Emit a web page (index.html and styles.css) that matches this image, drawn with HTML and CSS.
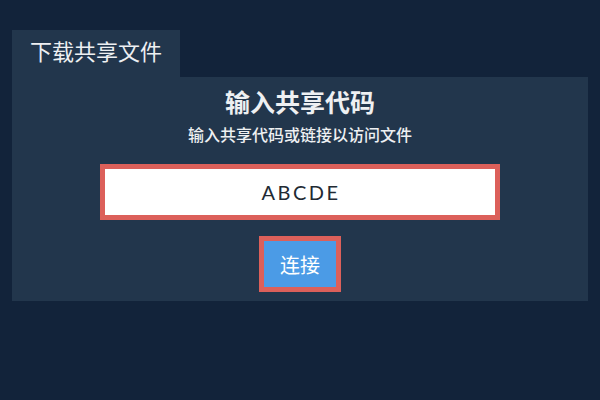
FILE: index.html
```html
<!DOCTYPE html>
<html lang="zh">
<head>
<meta charset="utf-8">
<title>下载共享文件</title>
<link rel="stylesheet" href="styles.css">
</head>
<body>
<div class="page">
  <div class="tab">下载共享文件</div>
  <div class="panel">
    <h1 class="title">输入共享代码</h1>
    <p class="subtitle">输入共享代码或链接以访问文件</p>
    <div class="code-box"><span class="code">ABCDE</span></div>
    <button class="connect">连接</button>
  </div>
</div>
</body>
</html>
```
FILE: styles.css
```css
html, body {
  margin: 0;
  padding: 0;
  background: #12233a;
  width: 600px;
  height: 400px;
  overflow: hidden;
  font-family: "Lato", "Noto Sans CJK SC", sans-serif;
}
.page {
  padding: 30px 12px 0;
}
.tab {
  width: 150px;
  height: 47px;
  padding-left: 18px;
  background: #22364c;
  color: #eef0f2;
  font-size: 22px;
  line-height: 44px;
}
.panel {
  height: 224px;
  background: #22364c;
  display: flex;
  flex-direction: column;
  align-items: center;
  padding-top: 10px;
  box-sizing: border-box;
}
.title {
  margin: 0;
  font-size: 25px;
  line-height: 30px;
  font-weight: bold;
  color: #eef0f2;
}
.subtitle {
  margin: 7px 0 0;
  font-size: 16px;
  line-height: 22px;
  font-weight: 500;
  color: #eef0f2;
}
.code-box {
  margin-top: 18px;
  width: 390px;
  height: 46px;
  border: 5px solid #dc605a;
  background: #ffffff;
  display: flex;
  align-items: center;
  justify-content: center;
}
.code {
  font-family: "Lato", sans-serif;
  font-size: 20px;
  letter-spacing: 2.5px;
  color: #222a33;
  padding-left: 2px;
}
.connect {
  margin-top: 16px;
  width: 82px;
  height: 56px;
  border: 5px solid #dc605a;
  background: #4b9be6;
  color: #ffffff;
  font-family: "Lato", "Noto Sans CJK SC", sans-serif;
  font-size: 20px;
  padding: 0;
}
```
